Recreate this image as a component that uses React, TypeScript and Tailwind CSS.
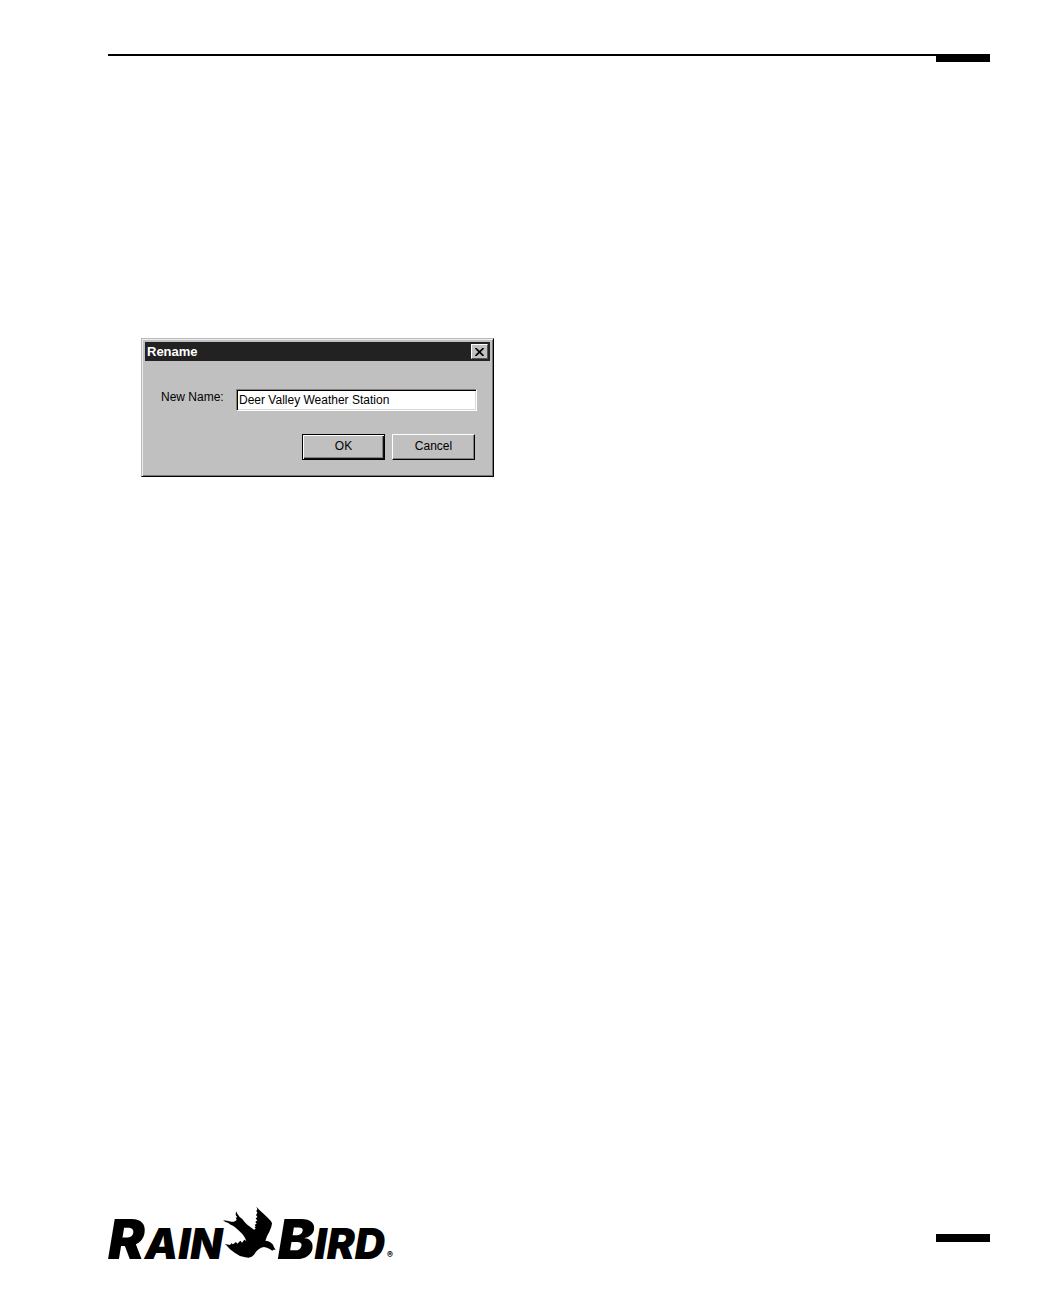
import { useState } from "react";

function Bird() {
  return (
    <svg
      className="mb-px h-[52px] w-[53px]"
      viewBox="24 18 159 156"
      fill="currentColor"
      aria-hidden="true"
    >
      <path d="M24 61 L36 62 L49 65 L57 65 L65 60 L63 55 L66 50 L62 45 L63 34 L68 43 L74 51 L82 57 L88 65 L97 74 L107 82 L117 89 L122 86 L119 82 L122 79 L119 74 L125 71 L121 66 L127 61 L122 56 L127 50 L123 45 L127 39 L124 32 L127 28 L124 20 L134 31 L144 40 L159 54 L168 64 L171 70 L169 80 L163 95 L156 109 L151 122 L160 124 L168 128 L174 134 L177 142 L182 149 L176 149 L172 152 L164 147 L156 143 L147 141 L138 143 L129 149 L123 155 L117 164 L110 170 L101 173 L91 172 L75 168 L60 159 L45 148 L37 139 L30 132 L45 135 L49 130 L54 133 L63 126 L67 131 L76 122 L81 128 L88 119 L94 123 L89 112 L82 102 L72 92 L62 83 L54 77 L47 74 L39 68 L31 66 Z" />
    </svg>
  );
}

function Logo() {
  return (
    <div className="flex items-end font-['Inter',sans-serif] font-black italic text-black">
      <span className="text-[55px] leading-[30px]">
        R<span className="text-[42px]">AIN</span>
      </span>
      <Bird />
      <span className="pl-0.5 text-[55px] leading-[30px]">
        B<span className="text-[42px]">IRD</span>
      </span>
      <span className="pl-0.5 text-[9px] leading-[8px] not-italic">®</span>
    </div>
  );
}

function RenameDialog() {
  const [name, setName] = useState("Deer Valley Weather Station");

  return (
    <form
      role="dialog"
      aria-labelledby="rename-title"
      onSubmit={(e) => e.preventDefault()}
      className="w-[353px] border border-t-[#b8b8b8] border-l-[#b8b8b8] border-r-black border-b-black bg-[#c0c0c0] p-[3px] shadow-[inset_1px_1px_#eeeeee,inset_-1px_-1px_#777777] font-['Liberation_Sans',Arial,sans-serif] text-[12px] text-black"
    >
      <div className="flex h-[19px] items-center justify-between bg-[#222222] px-0.5">
        <h1 id="rename-title" className="text-[13px] leading-4 font-bold text-white">
          Rename
        </h1>
        <button
          type="button"
          aria-label="Close"
          className="flex h-[15px] w-[17px] items-center justify-center border border-t-white border-l-white border-r-[#555555] border-b-[#555555] bg-[#c0c0c0]"
        >
          <svg className="h-2 w-[9px]" viewBox="0 0 9 8" stroke="currentColor" strokeWidth="1.7">
            <path d="M0.5 0 L8.5 8 M8.5 0 L0.5 8" />
          </svg>
        </button>
      </div>

      <div className="flex items-start justify-between pt-7 pr-[13px] pl-4">
        <label htmlFor="new-name" className="leading-4">
          New Name:
        </label>
        <input
          id="new-name"
          value={name}
          onChange={(e) => setName(e.target.value)}
          className="h-[22px] w-[241px] border border-t-[#808080] border-l-[#808080] border-r-white border-b-white bg-white pl-0.5 shadow-[inset_1px_1px_#000000,inset_-1px_-1px_#d8d8d8] outline-none"
        />
      </div>

      <div className="flex items-start justify-end gap-[7px] pt-[23px] pr-[15px] pb-[13px]">
        <button
          type="submit"
          className="h-[26px] w-[83px] border border-black bg-[#c0c0c0] pb-0.5 shadow-[inset_1px_1px_#ffffff,inset_-1px_-1px_#111111,inset_-2px_-2px_#808080]"
        >
          OK
        </button>
        <button
          type="button"
          className="h-[26px] w-[83px] border border-t-white border-l-white border-r-black border-b-black bg-[#c0c0c0] pb-0.5 shadow-[inset_-1px_-1px_#808080]"
        >
          Cancel
        </button>
      </div>
    </form>
  );
}

export default function App() {
  return (
    <div className="flex min-h-screen flex-col bg-white pt-[54px] pr-[54px] pb-[37px] pl-[108px]">
      <header className="flex items-start">
        <div className="h-0.5 flex-1 bg-black" />
        <div className="h-2 w-[54px] bg-black" />
      </header>

      <main className="flex-1 pt-[276px] pl-[33px]">
        <RenameDialog />
      </main>

      <footer className="flex items-end justify-between">
        <Logo />
        <div className="mb-[17px] h-2 w-[54px] bg-black" />
      </footer>
    </div>
  );
}
